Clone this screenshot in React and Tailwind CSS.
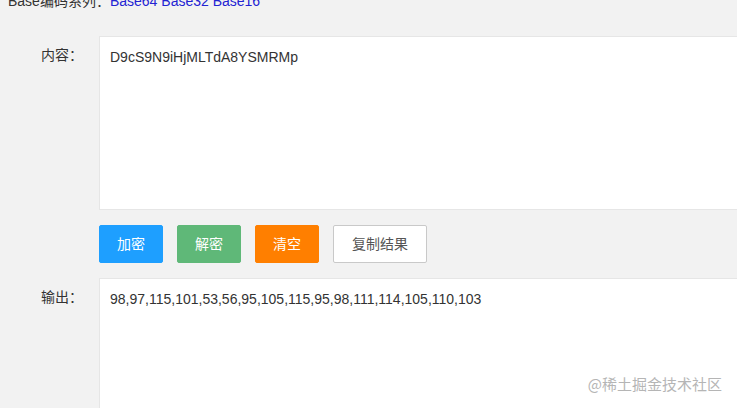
import React from 'react';

const font = { fontFamily: '"Liberation Sans", Arial, "Noto Sans CJK SC", sans-serif' };

function Row({ label, children }) {
  return (
    <div className="flex">
      <label className="w-[99px] shrink-0 pr-[16px] pt-[9px] text-right text-[14px] leading-[20px] text-[#333]">
        {label}
      </label>
      <div className="flex-1">{children}</div>
    </div>
  );
}

export default function App() {
  const buttons = [
    { text: '加密', cls: 'w-[64px] bg-[#1e9fff] text-white border-[#1e9fff]' },
    { text: '解密', cls: 'w-[64px] bg-[#5fb878] text-white border-[#5fb878]' },
    { text: '清空', cls: 'w-[64px] bg-[#ff7f00] text-white border-[#ff7f00]' },
    { text: '复制结果', cls: 'w-[94px] bg-white text-[#555] border-[#c9c9c9]' },
  ];

  return (
    <div className="relative h-[408px] overflow-hidden bg-[#f2f2f2]" style={font}>
      {/* 顶部说明 */}
      <div className="h-[36px]">
        <div className="relative -top-[9px] pl-[8px] text-[14px] leading-[20px] text-[#333]">
          Base编码系列：
          <a className="text-[#2323d3]">Base64</a>{' '}
          <a className="text-[#2323d3]">Base32</a>{' '}
          <a className="text-[#2323d3]">Base16</a>
        </div>
      </div>

      <Row label="内容：">
        <div className="h-[174px] w-[700px] border border-[#e6e6e6] bg-white px-[10px] py-[10px] text-[14px] leading-[20px] text-[#333]">
          D9cS9N9iHjMLTdA8YSMRMp
        </div>
      </Row>

      <div className="flex gap-[14px] pl-[99px] pt-[15px] pb-[15px]">
        {buttons.map(b => (
          <button
            key={b.text}
            className={`h-[38px] rounded-[2px] border text-[14px] ${b.cls}`}
          >
            {b.text}
          </button>
        ))}
      </div>

      <Row label="输出：">
        <div className="h-[174px] w-[700px] border border-[#e6e6e6] bg-white px-[10px] py-[10px] text-[14px] leading-[20px] text-[#333]">
          98,97,115,101,53,56,95,105,115,95,98,111,114,105,110,103
        </div>
      </Row>

      <div className="absolute right-[15px] bottom-[13px] text-[15px] text-[#b5b5b5]" style={{ fontFamily: '"Noto Sans CJK SC", sans-serif' }}>
        @稀土掘金技术社区
      </div>
    </div>
  );
}
